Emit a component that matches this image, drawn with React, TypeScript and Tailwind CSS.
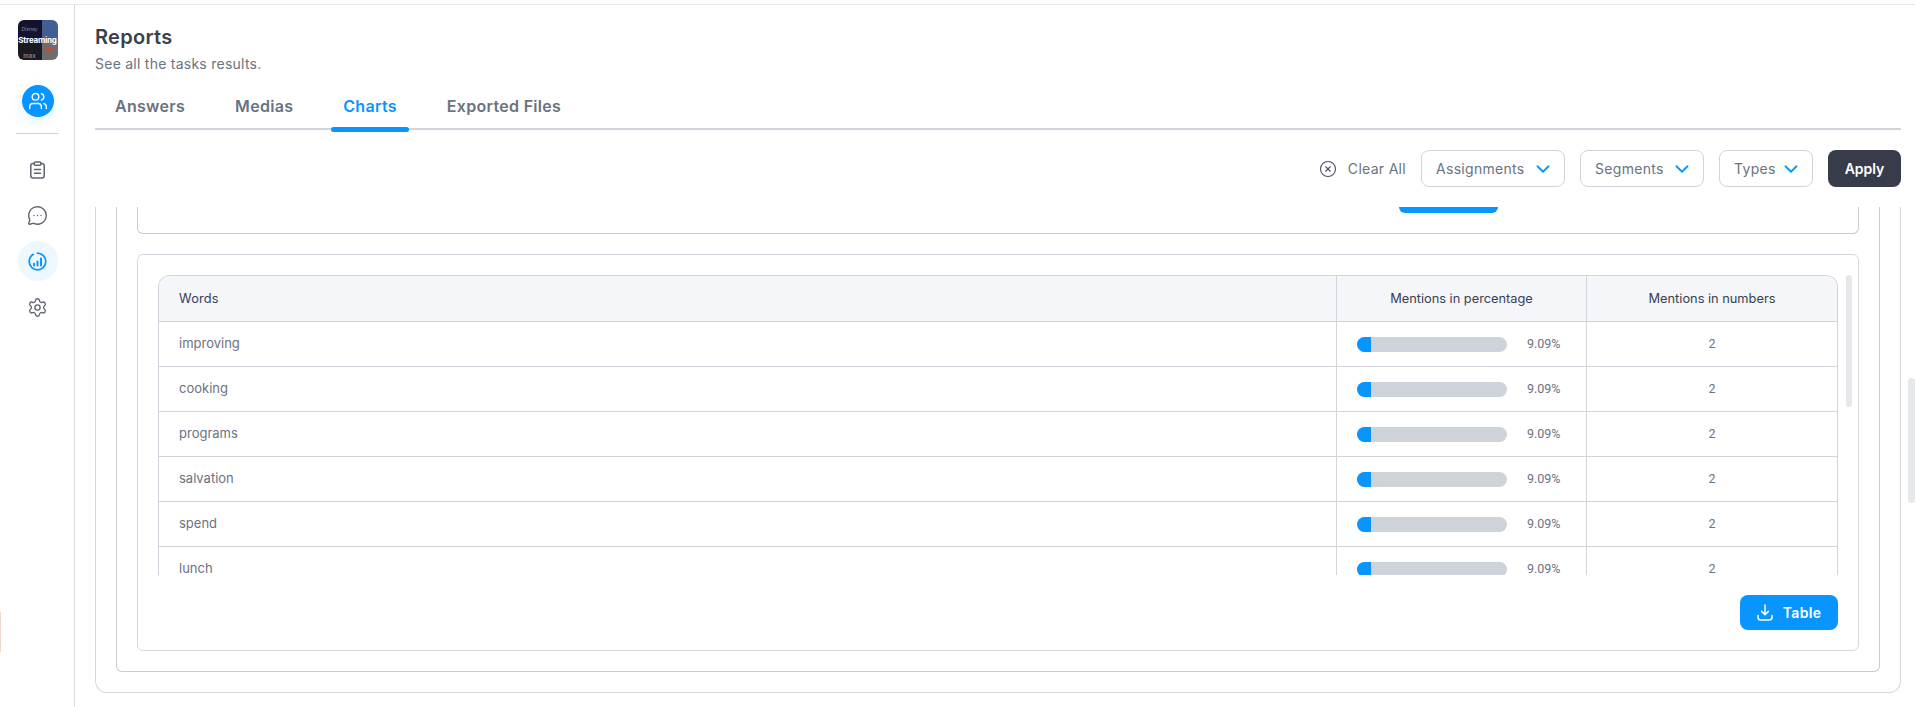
import React from 'react';
import { ChevronDown, CircleX, MessageCircleMore, Settings, Users } from 'lucide-react';

const rows = ['improving', 'cooking', 'programs', 'salvation', 'spend', 'lunch'];

const Filter = ({ label, width }: { label: string; width: string }) => (
  <button className={`${width} h-[37px] flex items-center justify-between pl-[14px] pr-[10px] border border-[#d1d5db] rounded-lg bg-white text-[14px] tracking-[0.3px] text-[#6b7280]`}>
    {label}
    <ChevronDown size={22} strokeWidth={2} className="text-[#0895ff]" />
  </button>
);

const Logo = () => (
  <div className="relative w-10 h-10 rounded-md overflow-hidden grid grid-cols-[24px_16px] grid-rows-[20px_20px]">
    <div className="bg-[#15122f] flex items-center justify-center">
      <span className="text-[5px] italic text-[#7f8fb5]">Disney</span>
    </div>
    <div className="bg-[#3f5f95]" />
    <div className="bg-[#1b1a20] flex items-end justify-center">
      <span className="text-[6px] font-bold text-[#77777f]">max</span>
    </div>
    <div className="bg-[#6d6d6f] flex items-center justify-center">
      <div className="w-[9px] h-1 bg-[#b5523c]" />
    </div>
    <div className="absolute inset-0 flex items-center justify-center">
      <span className="text-[8px] font-bold text-white tracking-tight">Streaming</span>
    </div>
  </div>
);

const Sidebar = () => (
  <aside className="w-[75px] shrink-0 border-r border-[#d8dbe2] flex flex-col items-center pt-[15px] pl-px">
    <Logo />
    <div className="mt-[25px] w-8 h-8 rounded-full bg-[#0895ff] flex items-center justify-center shadow-[0_4px_14px_rgba(8,149,255,0.12)]">
      <Users size={20} strokeWidth={1.6} className="text-white" />
    </div>
    <div className="mt-4 w-[43px] h-px bg-[#d1d5db]" />
    <div className="mt-[13px] flex flex-col items-center text-[#5f6470]">
      <div className="w-10 h-[46px] flex items-center justify-center">
        <svg width="15" height="18" viewBox="0 0 15 18" fill="none" stroke="currentColor" strokeWidth="1.5" strokeLinecap="round" strokeLinejoin="round">
          <path d="M4.2 2.6H3A2.2 2.2 0 0 0 .8 4.8v10A2.2 2.2 0 0 0 3 17h9a2.2 2.2 0 0 0 2.200-2.200v-10A2.2 2.2 0 0 0 12 2.600h-1.200" />
          <rect x="4.200" y="1" width="6.600" height="3.200" rx="1" />
          <path d="M4.500 8.500h6M4.500 12.300h6" />
        </svg>
      </div>
      <div className="w-10 h-[44px] flex items-center justify-center">
        <MessageCircleMore size={21} strokeWidth={1.6} />
      </div>
      <div className="w-10 h-10 mt-1 mb-[3px] rounded-full bg-[#edf7ff] flex items-center justify-center">
        <svg width="19" height="19" viewBox="0 0 19 19" fill="none" stroke="#0895ff" strokeWidth="1.7" strokeLinecap="round">
          <path d="M9.5 1.200a8.300 8.300 0 1 1-8.300 8.300 8.300 8.300 0 0 1 4.200-7.200" />
          <path d="M6 13.400v-1.600M9.500 13.400V9.600M13 13.400V6.400" strokeWidth="2" />
        </svg>
      </div>
      <div className="w-10 h-[46px] flex items-center justify-center">
        <Settings size={21} strokeWidth={1.5} />
      </div>
    </div>
  </aside>
);

const Tab = ({ label, active }: { label: string; active?: boolean }) => (
  <button className={`relative h-[26px] px-3 ${active ? 'text-[#0895ff]' : ''}`}>
    {label}
    {active && <span className="absolute left-0 right-0 top-[34px] h-[5px] rounded-full bg-[#0895ff]" />}
  </button>
);

const Tabs = () => (
  <div className="mt-[19px] h-[37px] flex gap-[26px] pl-2 border-b-2 border-[#d1d5db] text-[16px] tracking-[0.3px] font-semibold text-[#6b7280]">
    <Tab label="Answers" />
    <Tab label="Medias" />
    <Tab label="Charts" active />
    <Tab label="Exported Files" />
  </div>
);

const WordsTable = () => (
  <div className="h-[300px] overflow-hidden border-x border-t border-[#d1d5db] rounded-t-xl">
    <div className="grid grid-cols-[1fr_250px_251px] h-[46px] items-stretch bg-[#f4f6fa] border-b border-[#d1d5db] text-[12.8px] text-[#374151]">
      <div className="flex items-center pl-5 tracking-[0.2px]">Words</div>
      <div className="flex items-center justify-center border-l border-[#d1d5db]">Mentions in percentage</div>
      <div className="flex items-center justify-center border-l border-[#d1d5db]">Mentions in numbers</div>
    </div>
    {rows.map((word) => (
      <div key={word} className="grid grid-cols-[1fr_250px_251px] h-[45px] border-b border-[#d1d5db] text-[13px] text-[#6b7280]">
        <div className="flex items-center pl-5">{word}</div>
        <div className="flex items-center pl-5 border-l border-[#d1d5db] font-['Roboto',sans-serif] text-[12.5px]">
          <div className="w-[150px] h-[15px] rounded-full bg-[#ced2d9] overflow-hidden">
            <div className="w-[14px] h-full bg-[#0895ff]" />
          </div>
          <span className="ml-5">9.09%</span>
        </div>
        <div className="flex items-center justify-center border-l border-[#d1d5db] font-['Roboto',sans-serif] text-[12.5px]">2</div>
      </div>
    ))}
  </div>
);

export default function App() {
  return (
    <div className="h-[707px] flex flex-col bg-white overflow-hidden font-['Inter',sans-serif]">
      <div className="h-[5px] shrink-0 border-b border-[#e5e7eb]" />
      <div className="relative flex-1 flex min-h-0">
        <Sidebar />
        <main className="flex-1 min-w-0 flex flex-col pl-5 pr-[14px]">
          <header className="shrink-0 pt-[19px]">
            <h1 className="text-[20px] leading-[26px] tracking-[0.3px] font-semibold text-[#3a3f4b]">Reports</h1>
            <p className="mt-1 text-[14px] leading-5 tracking-[0.25px] text-[#6b7280]">See all the tasks results.</p>
            <Tabs />
            <div className="mt-5 flex items-center justify-end h-[37px]">
              <button className="flex items-center gap-[11px] text-[14px] tracking-[0.3px] text-[#6b7280]">
                <CircleX size={18} strokeWidth={1.5} className="text-[#4b5563]" />
                Clear All
              </button>
              <div className="ml-[15px] flex gap-[15px]">
                <Filter label="Assignments" width="w-[144px]" />
                <Filter label="Segments" width="w-[124px]" />
                <Filter label="Types" width="w-[94px]" />
              </div>
              <button className="ml-[15px] w-[73px] h-[37px] rounded-lg bg-[#383c4a] text-white text-[14px] font-semibold">Apply</button>
            </div>
          </header>

          {/* content scrolled down, top of the cards is cut off */}
          <div className="mt-5 flex-1 min-h-0 overflow-hidden flex flex-col justify-end pb-[14px]">
            <div className="shrink-0 border-x border-b border-[#d5d8df] rounded-b-xl px-5 pb-5">
              <div className="border-x border-b border-[#c9ccd3] rounded-b-md px-5 pb-5">
                <div className="h-[27px] border-x border-b border-[#c9ccd3] rounded-b-md flex justify-end pr-[360px]">
                  <div className="w-[99px] h-[6px] bg-[#0895ff] rounded-b-lg" />
                </div>
                <div className="relative mt-5 border border-[#d5d8df] rounded-md p-5">
                  <WordsTable />
                  <div className="absolute top-5 right-[6px] w-[6px] h-[132px] rounded-full bg-[#e5e7eb]" />
                  <div className="mt-5 flex justify-end">
                    <button className="w-[98px] h-[35px] rounded-lg bg-[#0895ff] text-white text-[14px] tracking-[0.3px] font-semibold flex items-center justify-center gap-[10px]">
                      <svg width="16" height="17" viewBox="0 0 16 17" fill="none" stroke="white" strokeWidth="1.5" strokeLinecap="round" strokeLinejoin="round">
                        <path d="M8 1v9.500M4.600 7.400 8 10.800l3.400-3.400" />
                        <path d="M1 11.500v1.700A2.800 2.800 0 0 0 3.800 16h8.400a2.800 2.800 0 0 0 2.800-2.800v-1.700" />
                      </svg>
                      Table
                    </button>
                  </div>
                </div>
              </div>
            </div>
          </div>
        </main>
        {/* page scrollbar thumb */}
        <div className="absolute right-0 top-[373px] w-[7px] h-[125px] rounded-full bg-[#e5e7eb]" />
        {/* stray mark on the left edge */}
        <div className="absolute left-0 top-[607px] w-px h-10 bg-[#f0d8cc]" />
      </div>
    </div>
  );
}
